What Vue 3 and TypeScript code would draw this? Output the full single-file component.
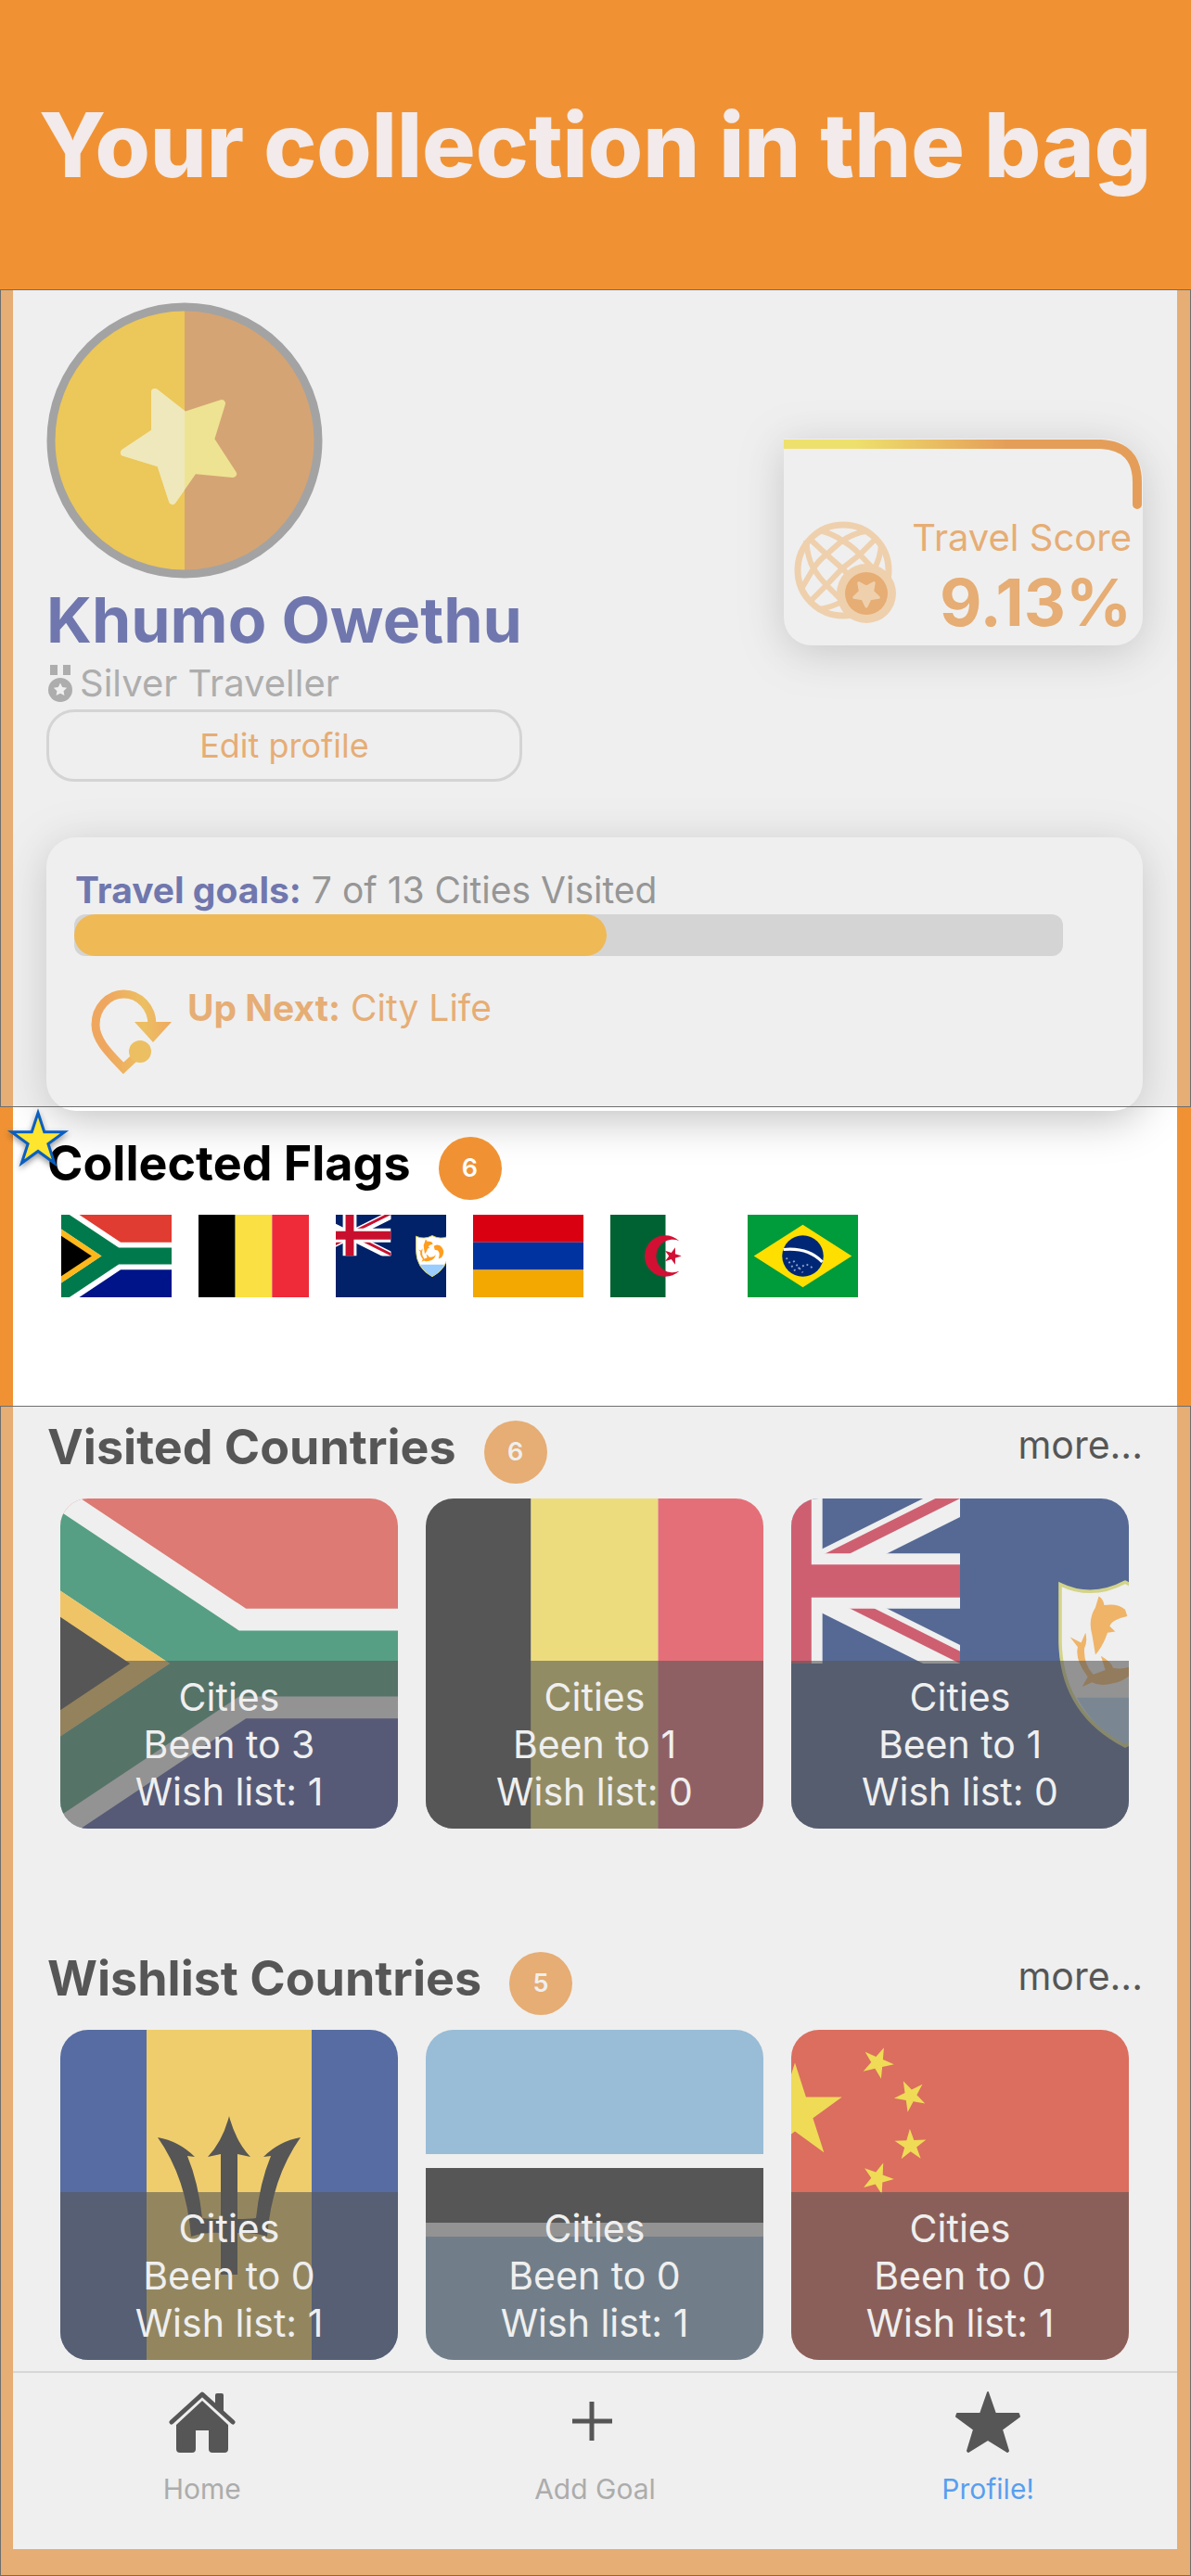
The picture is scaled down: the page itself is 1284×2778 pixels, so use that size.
<script setup lang="ts">
interface Country {
  code: string
  name: string
  been: number
  wish: number
}

interface Group {
  title: string
  count: number
  countries: Country[]
}

const visitedCities = 7
const totalCities = 13
const progress = `${(visitedCities / totalCities) * 100}%`

const collected = [
  { code: 'za', name: 'South Africa' },
  { code: 'be', name: 'Belgium' },
  { code: 'ai', name: 'Anguilla' },
  { code: 'am', name: 'Armenia' },
  { code: 'dz', name: 'Algeria' },
  { code: 'br', name: 'Brazil' },
]

const groups: Group[] = [
  {
    title: 'Visited Countries',
    count: 6,
    countries: [
      { code: 'za', name: 'South Africa', been: 3, wish: 1 },
      { code: 'be', name: 'Belgium', been: 1, wish: 0 },
      { code: 'ai', name: 'Anguilla', been: 1, wish: 0 },
    ],
  },
  {
    title: 'Wishlist Countries',
    count: 5,
    countries: [
      { code: 'bb', name: 'Barbados', been: 0, wish: 1 },
      { code: 'bw', name: 'Botswana', been: 0, wish: 1 },
      { code: 'cn', name: 'China', been: 0, wish: 1 },
    ],
  },
]

const avatarStar = 'M117 97L149 122L189 109L177 148L201 185L159 181L136 214L123 174L84 162L117 140Z'

/** Points of a five-pointed star; `turn` is the direction of its first tip in degrees. */
function star(cx: number, cy: number, r: number, turn = -90, inner = 0.382): string {
  return Array.from({ length: 10 }, (_, i) => {
    const a = ((turn + i * 36) * Math.PI) / 180
    const d = i % 2 ? r * inner : r
    return `${(cx + d * Math.cos(a)).toFixed(2)},${(cy + d * Math.sin(a)).toFixed(2)}`
  }).join(' ')
}

const chinaStars = [
  [10, 2],
  [12, 4],
  [12, 7],
  [10, 9],
].map(([x, y]) => star(x, y, 1, (Math.atan2(5 - y, 5 - x) * 180) / Math.PI))
</script>

<template>
  <div class="app">
    <svg class="defs" aria-hidden="true">
      <symbol id="flag-za" viewBox="0 0 90 60" preserveAspectRatio="xMidYMid slice">
        <path fill="#e03c31" d="M0 0H90V30H0Z" />
        <path fill="#001489" d="M0 30H90V60H0Z" />
        <g fill="none">
          <path stroke="#fff" stroke-width="20" d="M-9 -6L45 30L-9 66M45 30H90" />
          <path stroke="#007a4d" stroke-width="12" d="M-9 -6L45 30L-9 66M45 30H90" />
        </g>
        <path fill="#ffb81c" d="M0 7.2L34.2 30L0 52.8Z" />
        <path d="M0 12L27 30L0 48Z" />
      </symbol>
      <symbol id="flag-be" viewBox="0 0 411 356" preserveAspectRatio="xMidYMid slice">
        <path d="M0 0H137V356H0Z" />
        <path fill="#fae042" d="M137 0H274V356H137Z" />
        <path fill="#ef2b3a" d="M274 0H411V356H274Z" />
      </symbol>
      <symbol id="flag-ai" viewBox="0 0 60 30" preserveAspectRatio="xMidYMid slice">
        <path fill="#012169" d="M0 0H60V30H0Z" />
        <clipPath id="canton"><path d="M0 0H30V15H0Z" /></clipPath>
        <clipPath id="saltire">
          <path d="M15 7.5H30V15ZM15 7.5V15H0ZM15 7.5H0V0ZM15 7.5V0H30Z" />
        </clipPath>
        <g clip-path="url(#canton)" fill="none">
          <path stroke="#fff" stroke-width="3" d="M0 0L30 15M30 0L0 15" />
          <path stroke="#c8102e" stroke-width="2" clip-path="url(#saltire)" d="M0 0L30 15M30 0L0 15" />
          <path stroke="#fff" stroke-width="5" d="M15 0V15M0 7.5H30" />
          <path stroke="#c8102e" stroke-width="3" d="M15 0V15M0 7.5H30" />
        </g>
        <path fill="#fff" d="M39.1 7.8Q42 9.2 45 7.6Q48 9.2 50.9 7.8V13Q50.8 19.5 45 22.5Q39.2 19.5 39.1 13Z" />
        <path fill="#9cf" d="M40.6 18.1H49.4Q47.8 21 45 22.5Q42.2 21 40.6 18.1Z" />
        <path fill="none" stroke="#d2d257" stroke-width="0.3" d="M39.1 7.8Q42 9.2 45 7.6Q48 9.2 50.9 7.8V13Q50.8 19.5 45 22.5Q39.2 19.5 39.1 13Z" />
        <g fill="#ff9d1f">
          <path d="M42.6 8.9Q43 9.1 43.1 9.7Q44.3 9.5 45 10.1L45.2 10.7Q43.8 11 43.6 11.6L44.1 12.1L43.4 12.2Q43 13.4 42.3 14.2L42 12.4Q41.6 11 42.3 9.9Z" />
          <path d="M40 12.6L41 13.1L41.4 12.2Q41.6 13 41.3 13.6Q41.2 15 42.1 16L43.2 15.6L42.8 14.3Q43.8 14.9 43.9 15.4Q45.5 15.7 46.3 14.5Q45.8 16.4 43.9 16.8Q42.7 17.1 42 16.7L41.1 17.1L41.6 16.2Q40.4 14.6 40.7 13.5Z" />
          <path d="M45.6 11.4Q47.4 10.3 48.7 12.1Q49.7 13.8 48.3 15.6L47.3 16Q48 13.8 47 13L45.9 12.7Z" />
        </g>
      </symbol>
      <symbol id="flag-am" viewBox="0 0 120 90" preserveAspectRatio="xMidYMid slice">
        <path fill="#d90012" d="M0 0H120V30H0Z" />
        <path fill="#0033a0" d="M0 30H120V60H0Z" />
        <path fill="#f2a800" d="M0 60H120V90H0Z" />
      </symbol>
      <symbol id="flag-dz" viewBox="0 0 90 60" preserveAspectRatio="xMidYMid slice">
        <path fill="#fff" d="M0 0H90V60H0Z" />
        <path fill="#006233" d="M0 0H45V60H0Z" />
        <path fill="#d21034" d="M55 19A15 15 0 1 0 55 41A12 12 0 1 1 55 19Z" />
        <polygon fill="#d21034" :points="star(50, 30, 6.6, 0)" />
      </symbol>
      <symbol id="flag-br" viewBox="0 0 20 14" preserveAspectRatio="xMidYMid slice">
        <path fill="#009b3a" d="M0 0H20V14H0Z" />
        <path fill="#fedf00" d="M10 1.7L18.3 7L10 12.3L1.7 7Z" />
        <circle cx="10" cy="7" r="3.5" fill="#002776" />
        <path fill="none" stroke="#fff" stroke-width="0.5" d="M6.7 5.9Q10.9 5.5 13.3 8" />
        <path fill="none" stroke="#8fa3c8" stroke-width="0.3" stroke-dasharray="0.3 0.5" d="M7.2 7.3L8.6 9.4L10.6 8.4L12 9.2M8.4 7.8L10 9.8" />
      </symbol>
      <symbol id="flag-bb" viewBox="0 0 534 356" preserveAspectRatio="xMidYMid slice">
        <path fill="#00267f" d="M0 0H534V356H0Z" />
        <path fill="#ffc726" d="M178 0H356V356H178Z" />
        <path d="M267 93Q274 120 290 137L276 134V204Q289 204 296 203Q300 165 312 136L304 137Q321 120 344 116Q313 160 308 223Q292 218 276 219V264H258V219Q242 218 226 223Q221 160 190 116Q213 120 230 137L222 136Q234 165 238 203Q245 204 258 204V134L244 137Q260 120 267 93Z" />
      </symbol>
      <symbol id="flag-bw" viewBox="0 0 534 356" preserveAspectRatio="xMidYMid slice">
        <path fill="#70aad7" d="M0 0H534V356H0Z" />
        <path fill="#fff" d="M0 134H534V223H0Z" />
        <path d="M0 149H534V208H0Z" />
      </symbol>
      <symbol id="flag-cn" viewBox="0 0 30 20" preserveAspectRatio="xMidYMid slice">
        <path fill="#de2910" d="M0 0H30V20H0Z" />
        <g fill="#ffde00">
          <polygon :points="star(5, 5, 3)" />
          <polygon v-for="points in chinaStars" :key="points" :points="points" />
        </g>
      </symbol>
    </svg>

    <header class="banner">
      <h1>Your collection in the bag</h1>
    </header>

    <main class="screen">
      <section class="dimmed profile">
        <div class="pane">
          <div class="summary">
            <div class="person">
              <svg class="avatar" viewBox="0 0 298 298" role="img" aria-label="Profile badge">
                <clipPath id="left-half"><path d="M0 0H149V298H0Z" /></clipPath>
                <circle cx="149" cy="149" r="145" fill="#d48332" />
                <circle cx="149" cy="149" r="145" fill="#fbbd08" clip-path="url(#left-half)" />
                <g stroke-width="8" stroke-linejoin="round">
                  <path fill="#fdec65" stroke="#fdec65" :d="avatarStar" />
                  <path fill="#fef4ab" stroke="#fef4ab" clip-path="url(#left-half)" :d="avatarStar" />
                </g>
                <circle cx="149" cy="149" r="144" fill="none" stroke="#808080" stroke-width="9" />
              </svg>
              <h2 class="name">Khumo Owethu</h2>
              <p class="rank">
                <svg viewBox="0 0 30 42" aria-hidden="true">
                  <path fill="#929292" d="M4 1H12V12H4ZM18 1H26V12H18Z" />
                  <circle cx="15" cy="28" r="13" fill="#929292" />
                  <polygon fill="#fff" :points="star(15, 28, 7.5, -90, 0.5)" />
                </svg>
                Silver Traveller
              </p>
              <button type="button" class="edit">Edit profile</button>
            </div>

            <div class="score">
              <svg class="score-line" viewBox="0 0 387 80" aria-hidden="true">
                <linearGradient id="score-stroke" gradientUnits="userSpaceOnUse" x1="0" y1="0" x2="387" y2="0">
                  <stop offset="0.2" stop-color="#fde627" />
                  <stop offset="0.62" stop-color="#ee7905" />
                </linearGradient>
                <path fill="none" stroke="url(#score-stroke)" stroke-width="10" stroke-linecap="round" d="M-6 6H342Q381 8 381 47V71" />
              </svg>
              <svg class="globe" viewBox="0 0 120 120" aria-hidden="true">
                <g fill="none" stroke="#ffcb92" stroke-width="6">
                  <circle cx="60" cy="60" r="49" stroke-width="7" />
                  <path d="M25 27L42 43L59 58L75 75" />
                  <path d="M94 27L78 43L59 58L42 76L24 94" />
                  <path d="M34 17Q48 20 59 28Q70 34 78 43L93 59" />
                  <path d="M84 18Q72 20 59 28L42 43Q34 49 28 58L15 80" />
                  <path d="M20 28Q22 48 28 58Q34 68 42 76L59 93" />
                  <path d="M101 32Q100 48 93 59" />
                  <path d="M32 102Q46 101 60 93" />
                </g>
                <circle cx="85" cy="85" r="32" fill="#ffcb92" />
                <circle cx="85" cy="85" r="23" fill="#f09233" />
                <polygon fill="#ffcb92" stroke="#ffcb92" stroke-width="3" stroke-linejoin="round" :points="star(85, 85, 14, 90, 0.5)" />
              </svg>
              <div class="score-text">
                <span class="score-label">Travel Score</span>
                <strong class="score-value">9.13%</strong>
              </div>
            </div>
          </div>

          <div class="goals">
            <p class="goals-text"><b>Travel goals:</b> {{ visitedCities }} of {{ totalCities }} Cities Visited</p>
            <div class="bar" role="progressbar" aria-label="Travel goals" :aria-valuenow="visitedCities" aria-valuemin="0" :aria-valuemax="totalCities">
              <div class="bar-fill" :style="{ width: progress }"></div>
            </div>
            <div class="next">
              <svg viewBox="0 0 92 94" aria-hidden="true">
                <linearGradient id="route" gradientUnits="userSpaceOnUse" x1="10" y1="40" x2="92" y2="40">
                  <stop offset="0.1" stop-color="#ff8710" />
                  <stop offset="0.6" stop-color="#fbb015" />
                  <stop offset="1" stop-color="#ff8710" />
                </linearGradient>
                <path fill="none" stroke="url(#route)" stroke-width="9" d="M68 38A30.5 33 0 0 0 7 38C7 55 22 69 37 85L54 69" />
                <path fill="url(#route)" d="M49 35H89L69 57Z" />
                <circle cx="55" cy="67" r="12" fill="#fbb015" />
              </svg>
              <p><b>Up Next:</b> City Life</p>
            </div>
          </div>
        </div>
      </section>

      <section class="collected">
        <svg class="marker" viewBox="0 0 72 72" aria-hidden="true">
          <polygon fill="#ffe62e" stroke="#0a5fc0" stroke-width="3" :points="star(36, 36, 30)" />
        </svg>
        <div class="heading">
          <h2>Collected Flags</h2>
          <span class="badge">6</span>
        </div>
        <ul class="flags">
          <li v-for="flag in collected" :key="flag.code">
            <svg role="img" :aria-label="flag.name"><use :href="`#flag-${flag.code}`" width="100%" height="100%" /></svg>
          </li>
        </ul>
      </section>

      <div class="dimmed lower">
        <section v-for="group in groups" :key="group.title" class="group">
          <div class="heading">
            <h2>{{ group.title }}</h2>
            <span class="badge">{{ group.count }}</span>
            <a href="#" class="more">more...</a>
          </div>
          <ul class="cards">
            <li v-for="country in group.countries" :key="country.code" class="card">
              <svg role="img" :aria-label="country.name"><use :href="`#flag-${country.code}`" width="100%" height="100%" /></svg>
              <div class="caption">
                <span>Cities</span>
                <span>Been to {{ country.been }}</span>
                <span>Wish list: {{ country.wish }}</span>
              </div>
            </li>
          </ul>
        </section>

        <nav class="tabs">
          <a href="#">
            <svg viewBox="0 0 72 68" aria-hidden="true">
              <path d="M50 5Q50 3 52 3H57Q59 3 59 5V27L50 18Z" />
              <path fill="none" stroke="#000" stroke-width="5" stroke-linecap="round" stroke-linejoin="round" d="M3 34L36 4L69 34" />
              <path d="M36 11L64 37V63Q64 67 60 67H47Q43 67 43 63V43H29V63Q29 67 25 67H12Q8 67 8 63V37Z" />
            </svg>
            <span>Home</span>
          </a>
          <a href="#">
            <svg viewBox="0 0 72 68" aria-hidden="true">
              <path fill="none" stroke="#000" stroke-width="5" d="M12 33H55M33 12V54" />
            </svg>
            <span>Add Goal</span>
          </a>
          <a href="#" class="active" aria-current="page">
            <svg viewBox="0 0 72 68" aria-hidden="true">
              <path stroke="#000" stroke-width="2" stroke-linejoin="round" d="M36 2L44 25H69L70 28L51 42L58 65L57 66L36 53L15 66L14 65L21 42L2 28L3 25H28Z" />
            </svg>
            <span>Profile!</span>
          </a>
        </nav>
      </div>
    </main>
  </div>
</template>

<style>
body {
  margin: 0;
}
</style>

<style scoped>
.app {
  min-height: 100vh;
  box-sizing: border-box;
  padding: 0 15px 29px 14px;
  background: #f09233;
  font-family: Inter, "Liberation Sans", sans-serif;
  color: #000;
}

.app * {
  box-sizing: border-box;
}

h1,
h2,
p,
ul {
  margin: 0;
  padding: 0;
}

ul {
  list-style: none;
}

.defs {
  position: absolute;
  width: 0;
  height: 0;
}

.banner {
  display: flex;
  justify-content: center;
  height: 312px;
  padding-top: 96px;
}

.banner h1 {
  color: #f2eaeb;
  font-size: 96px;
  line-height: 120px;
  font-weight: 800;
  white-space: nowrap;
}

.screen {
  background: #fff;
}

.dimmed {
  position: relative;
}

.dimmed::after {
  content: "";
  position: absolute;
  inset: 0 -15px 0 -14px;
  border: 1px solid #6e6e6e;
  background: rgba(216, 216, 216, 0.4);
  pointer-events: none;
}

.lower::after {
  bottom: -29px;
}

.profile {
  display: flow-root;
}

.pane {
  display: flow-root;
  overflow-x: clip;
  overflow-y: visible;
  padding: 14px 37px 0 36px;
}

.summary {
  display: flex;
  align-items: center;
  justify-content: space-between;
}

.person {
  display: flex;
  flex-direction: column;
  gap: 3px;
}

.avatar {
  width: 298px;
  height: 298px;
}

.name {
  color: #2c3893;
  font-size: 68px;
  line-height: 82px;
  font-weight: 700;
}

.rank {
  display: flex;
  align-items: center;
  gap: 6px;
  color: #929292;
  font-size: 40px;
  line-height: 50px;
}

.rank svg {
  width: 30px;
  height: 42px;
}

.edit {
  height: 78px;
  border: 3px solid #d3d3d3;
  border-radius: 30px;
  background: none;
  color: #f09233;
  font-family: inherit;
  font-size: 36px;
}

.score {
  position: relative;
  display: flex;
  align-items: flex-end;
  justify-content: space-between;
  width: 387px;
  height: 223px;
  padding: 0 12px 3px 4px;
  border-radius: 0 44px 30px 30px;
  background: #fff;
  box-shadow: 0 8px 48px rgba(0, 0, 0, 0.26);
}

.score-line {
  position: absolute;
  top: 0;
  left: 0;
  width: 387px;
  height: 80px;
}

.globe {
  width: 120px;
  height: 120px;
  margin-bottom: 18px;
}

.score-text {
  display: flex;
  flex-direction: column;
  align-items: flex-end;
  color: #f09233;
}

.score-label {
  font-size: 40px;
  line-height: 54px;
}

.score-value {
  font-size: 70px;
  line-height: 86px;
  font-weight: 700;
}

.goals {
  margin: 60px 0 -4px;
  padding: 34px 86px 37px 30px;
  border-radius: 32px;
  background: #fff;
  box-shadow: 0 8px 48px rgba(0, 0, 0, 0.26);
}

.goals-text {
  padding-left: 1px;
  color: #6c6c6c;
  font-size: 39px;
  line-height: 46px;
}

.goals b {
  font-weight: 700;
}

.goals-text b {
  color: #2c3893;
}

.bar {
  height: 45px;
  margin-top: 3px;
  overflow: hidden;
  border-radius: 12px;
  background: #d3d3d3;
}

.bar-fill {
  height: 100%;
  border-radius: 24px;
  background: #ffa500;
}

.next {
  display: flex;
  gap: 14px;
  margin-top: 33px;
  padding-left: 16px;
  color: #f09233;
  font-size: 39px;
  line-height: 46px;
}

.next svg {
  width: 92px;
  height: 94px;
  margin-top: 3px;
}

.collected {
  position: relative;
  padding: 28px 36px 117px;
}

.marker {
  position: absolute;
  top: 0;
  left: -9px;
  width: 72px;
  height: 72px;
  filter: drop-shadow(0 3px 3px rgba(0, 0, 0, 0.4));
}

.heading {
  display: flex;
  align-items: flex-start;
  height: 73px;
  padding-left: 1px;
}

.heading h2 {
  font-size: 52px;
  line-height: 66px;
  font-weight: 700;
}

.badge {
  width: 68px;
  height: 68px;
  margin: 4px 0 0 30px;
  border-radius: 50%;
  background: #f09233;
  color: #fff;
  font-size: 27px;
  line-height: 68px;
  font-weight: 600;
  text-align: center;
}

.more {
  margin-left: auto;
  color: #000;
  font-size: 41px;
  line-height: 60px;
  text-decoration: none;
}

.flags {
  display: flex;
  flex-wrap: wrap;
  gap: 29px;
  margin-top: 15px;
  padding: 0 16px;
}

.flags svg {
  display: block;
  width: 119px;
  height: 89px;
}

.lower {
  padding-top: 12px;
}

.group {
  padding: 0 37px 0 36px;
}

.group + .group {
  margin-top: 129px;
}

.cards {
  display: grid;
  grid-template-columns: repeat(3, 1fr);
  gap: 30px;
  margin-top: 15px;
  padding: 0 15px;
}

.card {
  position: relative;
  height: 356px;
  overflow: hidden;
  border-radius: 30px;
}

.card svg {
  display: block;
  width: 100%;
  height: 100%;
}

.caption {
  position: absolute;
  inset: auto 0 0;
  display: flex;
  flex-direction: column;
  align-items: center;
  padding: 14px 0;
  background: rgba(0, 0, 0, 0.6);
  color: #fff;
  font-size: 41px;
  line-height: 51px;
}

.tabs {
  display: grid;
  grid-template-columns: repeat(3, 1fr);
  gap: 16px;
  height: 192px;
  margin-top: 12px;
  padding-top: 19px;
  border-top: 2px solid #d8d8d8;
}

.tabs a {
  display: flex;
  flex-direction: column;
  align-items: center;
  gap: 18px;
  color: #8f8f8f;
  font-size: 30px;
  line-height: 40px;
  text-decoration: none;
}

.tabs svg {
  width: 72px;
  height: 68px;
}

.tabs .active {
  color: #007aff;
}
</style>
